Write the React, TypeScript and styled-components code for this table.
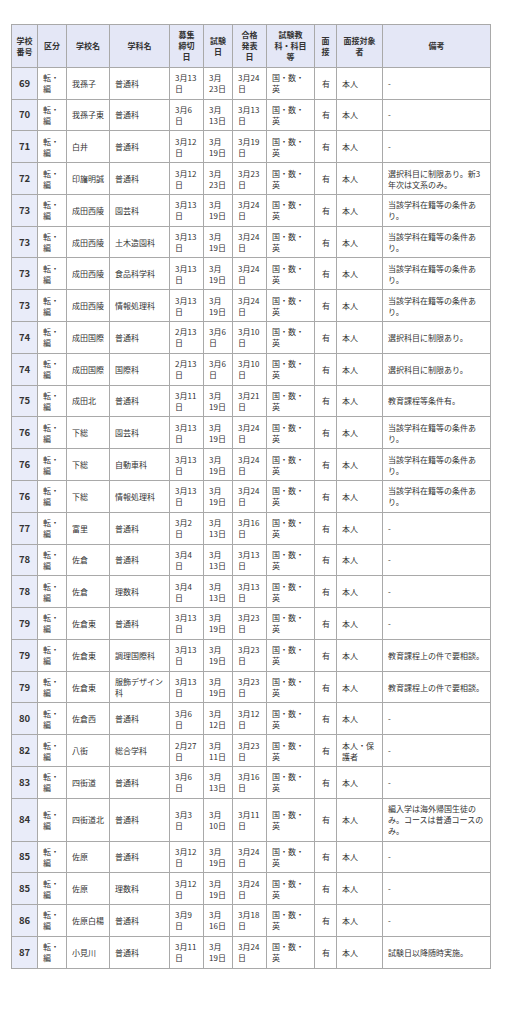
import styled, { createGlobalStyle } from 'styled-components';

const GlobalStyle = createGlobalStyle`
  html, body {
    margin: 0;
    padding: 0;
    background: #ffffff;
  }
  body {
    font-family: "Noto Sans CJK JP", "Noto Sans", sans-serif;
    color: #333333;
  }
`

const Page = styled.div`
  padding: 24px 0 40px 11px;
`

const Table = styled.table`
  border-collapse: collapse;
  table-layout: fixed;
  width: 480px;
  font-size: 8px;
  line-height: 11px;
`

const HeadCell = styled.th`
  background: #e4e7f6;
  border: 1px solid #a9a9a9;
  padding: 4.4px 2px;
  font-weight: 700;
  text-align: center;
  vertical-align: middle;
  white-space: nowrap;
`

const NumCell = styled.td`
  background: #e9ecf9;
  border: 1px solid #a9a9a9;
  padding: 4.4px 2px;
  font-size: 9.5px;
  font-weight: 700;
  text-align: center;
  vertical-align: middle;
`

const Cell = styled.td<{ $center?: boolean }>`
  border: 1px solid #a9a9a9;
  padding: 4.4px 4px 4.4px 5px;
  text-align: ${p => (p.$center ? 'center' : 'left')};
  vertical-align: middle;
  word-break: normal;
  line-break: normal;
`

const widths = [26, 29, 43, 60, 34, 29, 34, 48, 22, 46, 108]

const headers = [
  ['学校', '番号'],
  ['区分'],
  ['学校名'],
  ['学科名'],
  ['募集', '締切', '日'],
  ['試験', '日'],
  ['合格', '発表', '日'],
  ['試験教', '科・科目', '等'],
  ['面', '接'],
  ['面接対象', '者'],
  ['備考'],
]

type Row = [string, string, string, string, string, string, string?, string?]

const COND = '当該学科在籍等の条件あり。'
const SODAN = '教育課程上の件で要相談。'

const rows: Row[] = [
  ['69', '我孫子', '普通科', '3月13日', '3月23日', '3月24日'],
  ['70', '我孫子東', '普通科', '3月6日', '3月13日', '3月13日'],
  ['71', '白井', '普通科', '3月12日', '3月19日', '3月19日'],
  ['72', '印旛明誠', '普通科', '3月12日', '3月23日', '3月23日', '選択科目に制限あり。新3年次は文系のみ。'],
  ['73', '成田西陵', '園芸科', '3月13日', '3月19日', '3月24日', COND],
  ['73', '成田西陵', '土木造園科', '3月13日', '3月19日', '3月24日', COND],
  ['73', '成田西陵', '食品科学科', '3月13日', '3月19日', '3月24日', COND],
  ['73', '成田西陵', '情報処理科', '3月13日', '3月19日', '3月24日', COND],
  ['74', '成田国際', '普通科', '2月13日', '3月6日', '3月10日', '選択科目に制限あり。'],
  ['74', '成田国際', '国際科', '2月13日', '3月6日', '3月10日', '選択科目に制限あり。'],
  ['75', '成田北', '普通科', '3月11日', '3月19日', '3月21日', '教育課程等条件有。'],
  ['76', '下総', '園芸科', '3月13日', '3月19日', '3月24日', COND],
  ['76', '下総', '自動車科', '3月13日', '3月19日', '3月24日', COND],
  ['76', '下総', '情報処理科', '3月13日', '3月19日', '3月24日', COND],
  ['77', '富里', '普通科', '3月2日', '3月13日', '3月16日'],
  ['78', '佐倉', '普通科', '3月4日', '3月13日', '3月13日'],
  ['78', '佐倉', '理数科', '3月4日', '3月13日', '3月13日'],
  ['79', '佐倉東', '普通科', '3月13日', '3月19日', '3月23日'],
  ['79', '佐倉東', '調理国際科', '3月13日', '3月19日', '3月23日', SODAN],
  ['79', '佐倉東', '服飾デザイン科', '3月13日', '3月19日', '3月23日', SODAN],
  ['80', '佐倉西', '普通科', '3月6日', '3月12日', '3月12日'],
  ['82', '八街', '総合学科', '2月27日', '3月11日', '3月23日', '-', '本人・保護者'],
  ['83', '四街道', '普通科', '3月6日', '3月13日', '3月16日'],
  ['84', '四街道北', '普通科', '3月3日', '3月10日', '3月11日', '編入学は海外帰国生徒のみ。コースは普通コースのみ。'],
  ['85', '佐原', '普通科', '3月12日', '3月19日', '3月24日'],
  ['85', '佐原', '理数科', '3月12日', '3月19日', '3月24日'],
  ['86', '佐原白楊', '普通科', '3月9日', '3月16日', '3月18日'],
  ['87', '小見川', '普通科', '3月11日', '3月19日', '3月24日', '試験日以降随時実施。'],
]

export default function App() {
  return (
    <Page>
      <GlobalStyle />
      <Table>
        <colgroup>
          {widths.map((w, i) => (
            <col key={i} style={{ width: w }} />
          ))}
        </colgroup>
        <thead>
          <tr>
            {headers.map((lines, i) => (
              <HeadCell key={i}>
                {lines.map((l, j) => (
                  <span key={j}>
                    {j > 0 && <br />}
                    {l}
                  </span>
                ))}
              </HeadCell>
            ))}
          </tr>
        </thead>
        <tbody>
          {rows.map(([no, school, dept, deadline, exam, result, note = '-', target = '本人'], i) => (
            <tr key={i}>
              <NumCell>{no}</NumCell>
              <Cell>転・編</Cell>
              <Cell>{school}</Cell>
              <Cell>{dept}</Cell>
              <Cell>{deadline}</Cell>
              <Cell>{exam}</Cell>
              <Cell>{result}</Cell>
              <Cell>国・数・英</Cell>
              <Cell $center>有</Cell>
              <Cell>{target}</Cell>
              <Cell>{note}</Cell>
            </tr>
          ))}
        </tbody>
      </Table>
    </Page>
  )
}
